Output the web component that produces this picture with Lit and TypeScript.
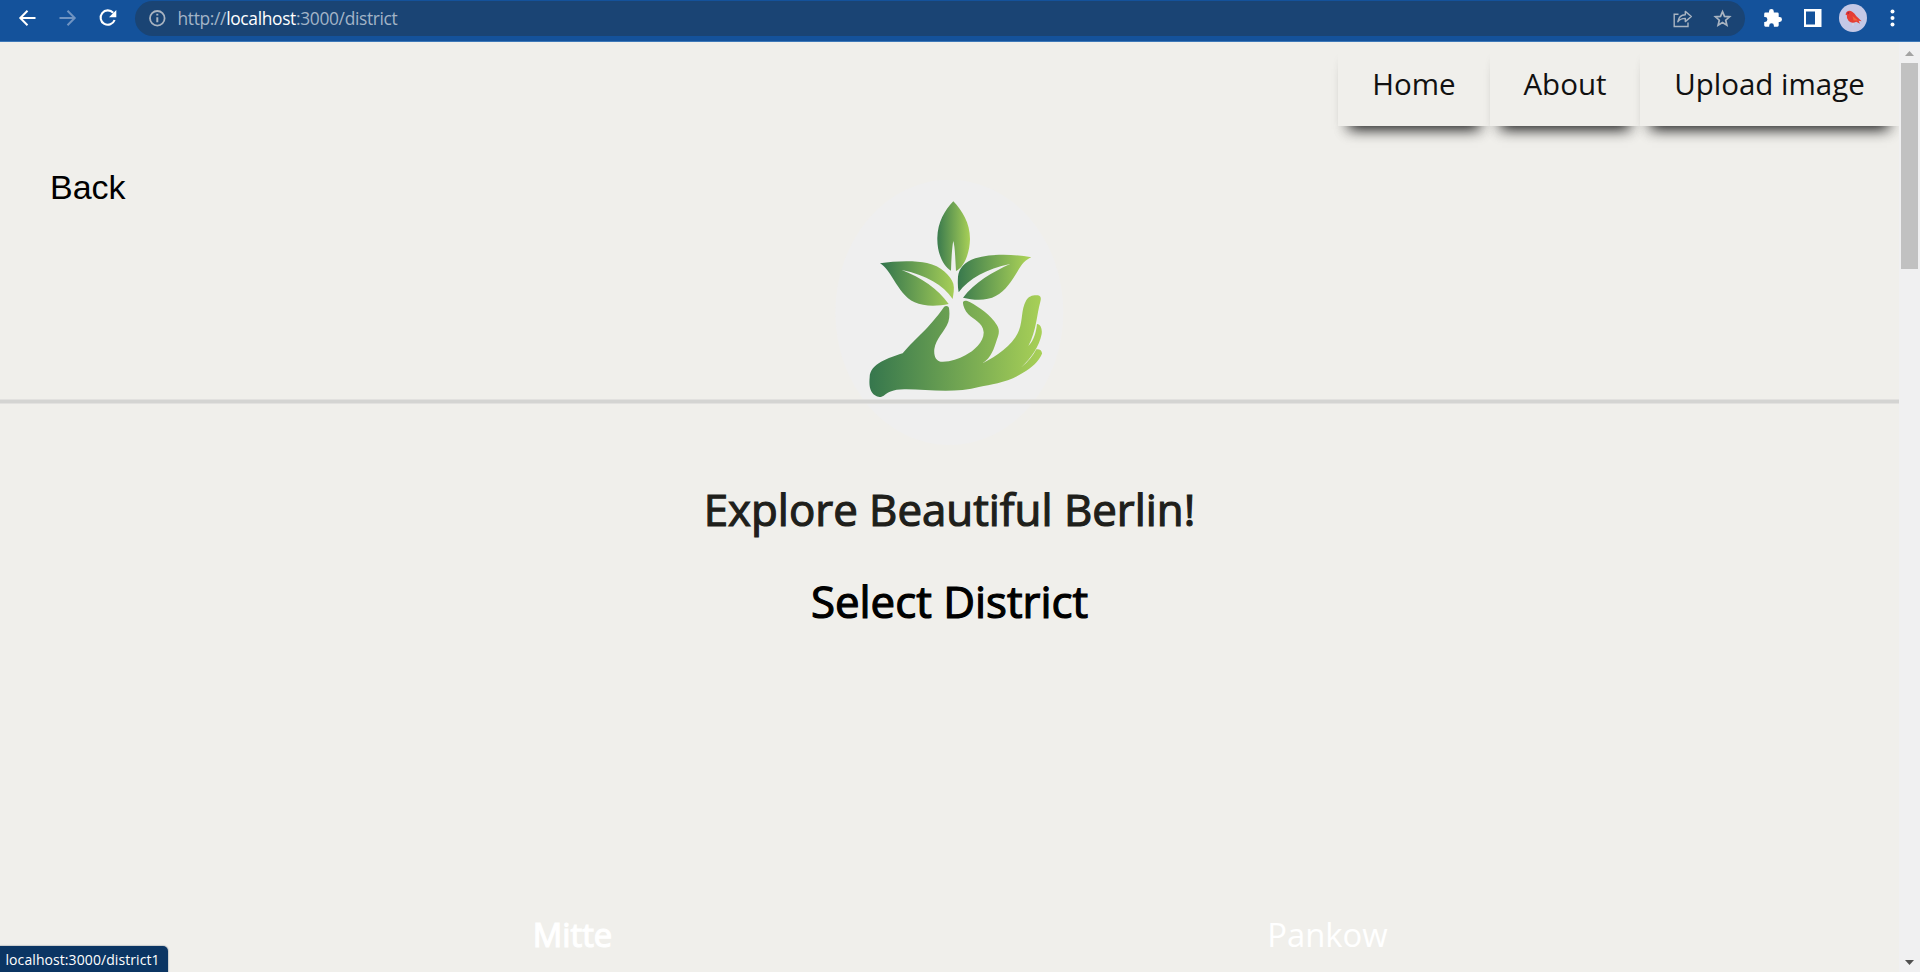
import { LitElement, html, css, svg } from "lit";
import { customElement } from "lit/decorators.js";

@customElement("browser-bar")
class BrowserBar extends LitElement {
  static styles = css`
    :host { display: block; }
    .bar { box-sizing: border-box; height: 42px; background: #14529b; border-bottom: 1px solid #3d78b8; display: flex; align-items: flex-start; }
    .nav { width: 135px; height: 36px; flex: none; }
    .pill { flex: none; width: 1610px; height: 35px; margin-top: 1px; border-radius: 18px; background: #1a4474; display: flex; }
    .info { width: 42px; height: 35px; flex: none; }
    .url { flex: 1; padding-left: 0.5px; font: 17.4px/35px "Open Sans", sans-serif; color: #a3b4c7; white-space: nowrap; letter-spacing: -0.34px; }
    .host { color: #fff; }
    .actions { width: 120px; height: 35px; flex: none; }
    .tools { flex: 1; height: 41px; }
    svg { display: block; }
  `;
  render() {
    return html`<div class="bar">
      <svg class="nav" viewBox="0 0 135 36" fill="none" stroke="#fff" stroke-width="2">
        <path d="M35.5 18H20.5M27.5 10.8L20.3 18L27.5 25.2" />
        <path stroke="#7094c2" d="M59.5 18H74.5M67.5 10.8L74.7 18L67.5 25.2" />
        <path d="M113.2 12.8A7.2 7.2 0 1 0 114.6 20" stroke-width="2.1" />
        <path d="M116.3 10V17.2H109Z" fill="#fff" stroke="none" />
      </svg>
      <div class="pill">
        <svg class="info" viewBox="135 1 42 35" fill="none" stroke="#a9b4c1" stroke-width="1.8">
          <circle cx="157.3" cy="18.3" r="7.3" /><path d="M157.3 17.3V22.3M157.3 13.7V15.6" stroke-width="2" />
        </svg>
        <div class="url">http://<span class="host">localhost</span>:3000/district</div>
        <svg class="actions" viewBox="1625 1 120 35" fill="none" stroke="#a9b4c1" stroke-width="1.4">
          <path d="M1678.5 14.2H1674.2V26.5H1688V22.6" />
          <path d="M1677.8 21.8C1678.5 17.5 1681 14.9 1685.3 14.7V11.4L1691.3 16.5L1685.3 21.6V18.4C1682 18.4 1679.5 19.4 1677.8 21.8Z" stroke-linejoin="round" />
          <path d="M1722.5 11.6L1724.5 16.4L1729.6 16.8L1725.7 20.2L1726.9 25.3L1722.5 22.6L1718.1 25.3L1719.3 20.2L1715.4 16.8L1720.5 16.4Z" stroke-width="1.7" />
        </svg>
      </div>
      <svg class="tools" viewBox="1745 0 175 41">
        <path fill="#fff" d="M1765.4 12.5h3.6v-1a2.4 2.4 0 0 1 4.8 0v1h3.6q1.3 0 1.3 1.3v3.3h.9a2.4 2.4 0 0 1 0 4.8h-.9v3.4q0 1.4-1.3 1.4h-3.5v-1a2.3 2.3 0 0 0-4.7 0v1h-3.7q-1.3 0-1.3-1.4v-3.4h.8a2.4 2.4 0 0 0 0-4.8h-.8v-3.2q0-1.4 1.2-1.4z" />
        <path fill="#fff" fill-rule="evenodd" d="M1804 9h17.5v18H1804zM1806 11.5v13h9v-13z" />
        <circle cx="1853" cy="18" r="14" fill="#c4c8e6" />
        <path fill="#e53e35" d="M1845.4 14.4L1846.6 12Q1849.3 9.8 1852.2 11.8Q1854.4 13.2 1856.4 16.2L1861.7 21.2L1858.6 20.8L1860 23.8L1856.2 21.8Q1852 24.2 1848.7 21Q1846.2 18.6 1846.9 15.2Z" />
        <path fill="#f4683c" d="M1852.5 16L1858 20.4L1853.6 20.4Z" /><path fill="#a92440" d="M1846.6 12.8L1849.6 11.8L1848.5 14.3Z" />
        <path stroke="#dedce3" d="M1853 23.2V25.5" />
        <g fill="#fff"><circle cx="1892.5" cy="11.5" r="2" /><circle cx="1892.5" cy="18" r="2" /><circle cx="1892.5" cy="24.4" r="2" /></g>
      </svg>
    </div>`;
  }
}

@customElement("hand-logo")
class HandLogo extends LitElement {
  static styles = css`:host { display: block; } svg { display: block; width: 261px; height: 270px; }`;
  private gradient(id: string, x1: number, x2: number) {
    return svg`<linearGradient id=${id} gradientUnits="userSpaceOnUse" x1=${x1} y1="0" x2=${x2} y2="0">
      <stop offset="0" stop-color="#36774d" /><stop offset="1" stop-color="#a8d057" /></linearGradient>`;
  }
  render() {
    return html`<svg viewBox="-3 0 783 810">
      <defs>${this.gradient("hand", 150, 665)}${this.gradient("top", 348, 450)}${this.gradient("left", 190, 405)}${this.gradient("right", 410, 620)}</defs>
      <ellipse cx="388" cy="397" rx="342" ry="398" fill="#efefef" />
      <path fill="url(#top)" d="M400 64C426 91 450 129 450 177C449 222 431 263 408 273L406 238Q404 196 400 183Q395 205 393 272C370 259 351 220 352 174C353 127 374 91 400 64Z" />
      <path fill="url(#left)" d="M180 250C225 242 287 241 321 249C363 258 392 287 400 311C404 326 400 342 398 357C370 315 319 285 245 270C303 292 354 326 386 372C354 379 311 380 284 367C255 354 238 326 222 301C207 277 195 258 180 250Z" />
      <path fill="url(#right)" d="M634 232C579 222 513 221 466 235C433 245 417 266 414 290C413 306 413 321 416 337C447 295 500 267 570 252C520 275 462 308 429 353C460 361 502 363 527 348C556 334 575 302 592 275C607 250 616 240 634 232Z" />
      <path fill="url(#hand)" d="M372 381C377 376 386 378 387 384C389 397 389 412 385 426C373 457 348 475 343 507C341 529 348 543 362 545C388 547 415 537 436 526C463 512 492 486 491 457C489 427 461 420 445 403C434 391 428 375 429 366C434 360 440 363 449 366C478 381 513 407 530 434C540 449 537 462 531 478C522 507 513 534 489 549C532 528 583 490 597 451C609 419 603 389 618 362C627 348 638 345 654 346C663 348 664 355 661 365C650 403 650 451 625 498C642 481 648 458 651 432C663 433 667 449 665 462C657 500 635 532 604 562C625 545 639 527 649 508C658 506 667 512 666 521C657 544 633 564 609 578C567 606 512 614 480 620C398 642 319 627 253 628C216 629 207 636 191 647C181 653 174 652 165 646C148 634 147 612 149 592C150 551 207 533 248 520C288 473 326 447 372 381Z" />
    </svg>`;
  }
}

@customElement("app-root")
class AppRoot extends LitElement {
  static styles = css`
    :host { display: block; height: 972px; overflow: hidden; position: relative; font-family: "Open Sans", sans-serif; color: #000; }
    .viewport { display: flex; height: 930px; }
    .page { width: 1899px; height: 930px; background: #f0efeb; overflow: hidden; }
    .menu { height: 84px; display: flex; justify-content: flex-end; }
    .item { box-sizing: border-box; height: 84px; font-size: 29.5px; line-height: 41px; padding-top: 21px; text-align: center; background: #f0efeb; color: #111; box-shadow: 0 15px 13px -12px #1c1c1c, 0 12px 11px -5px rgba(0,0,0,.12); }
    .home { width: 152px; } .about { width: 150px; } .upload { width: 259px; }
    .hero { height: 357px; display: grid; grid-template-columns: 1fr 261px 1fr; }
    .back { grid-area: 1 / 1; padding-left: 50px; font: 34px/40px "Liberation Sans", Arial, sans-serif; margin-top: 41px; }
    .logo { grid-area: 1 / 2; margin-top: 54px; }
    .line { grid-area: 1 / 1 / 2 / 4; margin-top: 273px; height: 5px; background: linear-gradient(#e2e1df 0 1px, #d4d4d2 1px 4px, #e2e1df 4px 5px); z-index: 1; }
    .title, .subtitle { margin: 0; text-align: center; font-weight: 400; font-size: 43.8px; line-height: 62px; }
    .title { margin-top: -5px; color: #1f1f1b; -webkit-text-stroke: 1.2px #1f1f1b; }
    .subtitle { margin-top: 30px; -webkit-text-stroke: 1.2px #000; }
    .districts { display: flex; margin-top: 280px; color: #fff; font-size: 32.8px; line-height: 46px; text-align: center; }
    .mitte { margin-left: 472.5px; width: 200px; -webkit-text-stroke: 1.2px #fff; }
    .pankow { margin-left: 555px; width: 200px; }
    .scroll { width: 21px; height: 930px; background: #f0f0f1; display: flex; flex-direction: column; align-items: center; }
    .arrow { display: block; width: 21px; height: 21px; }
    .thumb { width: 17px; height: 206px; background: #c1c1c1; }
    .spacer { flex: 1; }
    .status { position: absolute; left: 0; bottom: 0; box-sizing: border-box; width: 168px; height: 26px; padding-left: 5.5px; background: #0b3563; color: #fff; border-top-right-radius: 5px; box-shadow: 0 0 1px 1px #c9cbcc; font-size: 14px; line-height: 27px; letter-spacing: 0.08px; white-space: nowrap; }
  `;
  render() {
    return html`<browser-bar></browser-bar>
      <div class="viewport">
        <main class="page">
          <nav class="menu"><div class="item home">Home</div><div class="item about">About</div><div class="item upload">Upload image</div></nav>
          <section class="hero"><div class="back">Back</div><hand-logo class="logo"></hand-logo><div class="line"></div></section>
          <h1 class="title">Explore Beautiful Berlin!</h1>
          <h2 class="subtitle">Select District</h2>
          <div class="districts"><div class="mitte">Mitte</div><div class="pankow">Pankow</div></div>
        </main>
        <div class="scroll">
          <svg class="arrow" viewBox="0 0 21 21"><path fill="#a3a3a3" d="M6 14h9l-4.5-5z" /></svg>
          <div class="thumb"></div><div class="spacer"></div>
          <svg class="arrow" viewBox="0 0 21 21"><path fill="#505050" d="M6 9h9l-4.5 5z" /></svg>
        </div>
      </div>
      <div class="status">localhost:3000/district1</div>`;
  }
}
